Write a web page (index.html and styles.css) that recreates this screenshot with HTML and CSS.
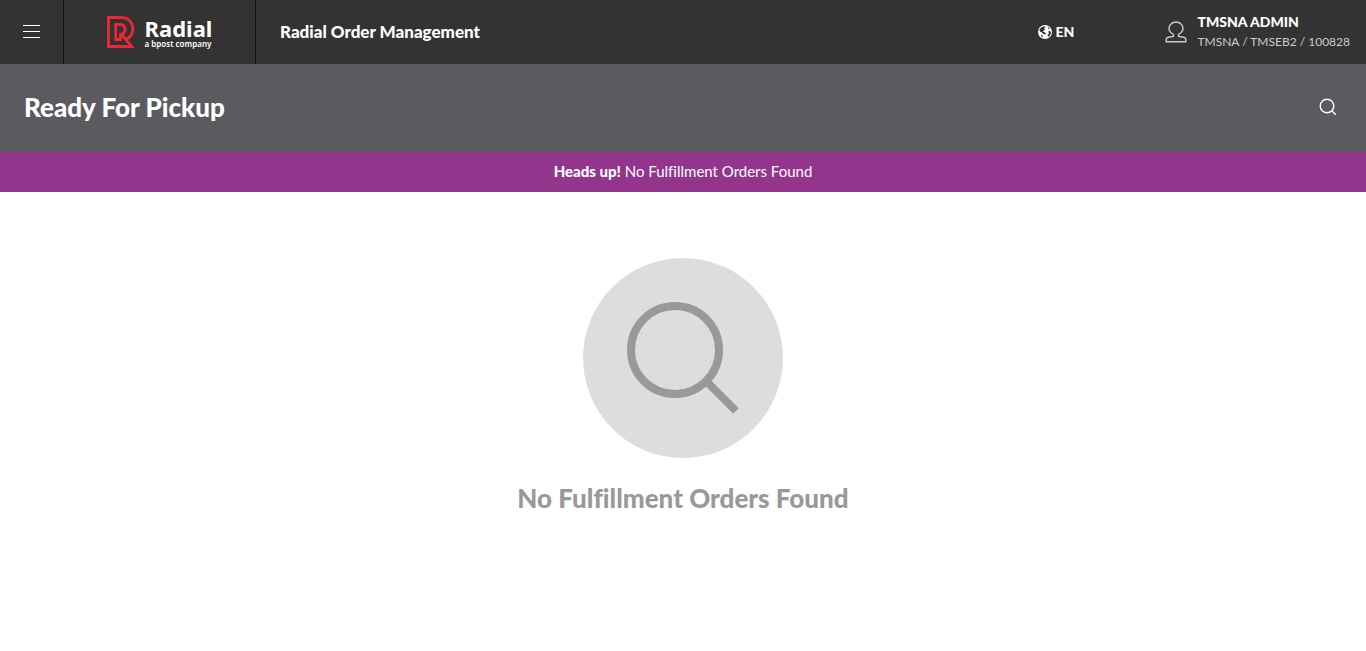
FILE: index.html
```html
<!DOCTYPE html>
<html lang="en">
<head>
<meta charset="utf-8">
<meta name="viewport" content="width=device-width, initial-scale=1">
<title>Ready For Pickup</title>
<link rel="stylesheet" href="styles.css">
</head>
<body>
<header class="topbar">
  <button class="menu-button" type="button" aria-label="Menu">
    <svg width="17" height="14" viewBox="0 0 17 14" aria-hidden="true"><path d="M0 .5h17M0 6.500h17M0 12.500h17" stroke="#fff"/></svg>
  </button>
  <a class="brand" href="#">
    <svg width="28" height="32" viewBox="0 0 28 32" fill="none" stroke="#ee2737" stroke-width="2.800" aria-hidden="true">
      <path d="M13.500 17v6.500H8.700V8.500h4.800a5 5 0 0 1 1.500 9.600l-.5.200L24.800 30.500H1.500v-29h12.500c7.200 0 11.800 4.800 11.800 11.200 0 5-2.600 8.700-6.800 10.700"/>
    </svg>
    <span class="brand-text">
      <span class="brand-name">Radial</span>
      <span class="brand-tagline">a bpost company</span>
    </span>
  </a>
  <span class="app-title">Radial Order Management</span>
  <button class="language" type="button">
    <svg width="14" height="14" viewBox="0 0 14 14" aria-hidden="true">
      <circle cx="7" cy="7" r="7" fill="#fff"/>
      <path fill="#333" d="M3 2.600L6.200 1.200 7.500 2 6 3.400l1.200.8L5.600 5.700 5 7l1.600.2L8.200 8.600 7 9.600 5.200 8.800 3.800 7.400 2 6.500 1.300 5zM9.500 1.600l2.500 2L10.600 4zM10.200 6.500l1.800-.6 1 1.600-.8 2.800L10 12l-.4-2 1.400-1.500zM3 9.500l1.500 1L5 12.600 3 11z"/>
    </svg>
    <span>EN</span>
  </button>
  <button class="account" type="button">
    <svg width="22" height="22" viewBox="0 0 22 22" fill="none" stroke="#ccc" stroke-width="1.400" aria-hidden="true">
      <path d="M8.500 15.500v-2C6 12 4 9.500 4 7.500a7 6.500 0 0 1 14 0c0 2-2 4.500-4.500 6v2l5.300.8c1.500.3 2 .9 2 2v2.400H1.200v-2.400c0-1.100.5-1.700 2-2z"/>
    </svg>
    <span class="account-text">
      <span class="account-name">TMSNA ADMIN</span>
      <span class="account-detail">TMSNA / TMSEB2 / 100828</span>
    </span>
  </button>
</header>
<div class="page-header">
  <h1 class="page-title">Ready For Pickup</h1>
  <button class="search-button" type="button" aria-label="Search">
    <svg width="18" height="18" viewBox="0 0 18 18" fill="none" stroke="#fff" stroke-width="1.400" aria-hidden="true"><circle cx="8" cy="8" r="6.800"/><path d="M12.800 12.800l4 4"/></svg>
  </button>
</div>
<div class="alert" role="alert"><strong>Heads up!</strong> No Fulfillment Orders Found</div>
<main class="empty-state">
  <svg class="empty-icon" width="200" height="200" viewBox="0 0 200 200" fill="none" aria-hidden="true">
    <circle cx="100" cy="100" r="100" fill="#ddd"/>
    <circle cx="92" cy="92" r="44" stroke="#999" stroke-width="8"/>
    <path d="M124 124l29 29" stroke="#999" stroke-width="8"/>
  </svg>
  <h2 class="empty-title">No Fulfillment Orders Found</h2>
</main>
</body>
</html>
```

FILE: styles.css
```css
* { box-sizing: border-box; }
body {
  margin: 0;
  background: #fff;
  color: #fff;
  font-family: Lato, "Liberation Sans", sans-serif;
  font-size: 14px;
  font-variant-ligatures: none;
  line-height: 20px;
}
button {
  padding: 0;
  border: 0;
  background: none;
  color: inherit;
  font: inherit;
  cursor: pointer;
}
svg { display: block; flex: none; }
.topbar {
  display: flex;
  align-items: center;
  height: 64px;
  background: #333;
}
.menu-button {
  display: flex;
  align-items: center;
  justify-content: center;
  align-self: stretch;
  width: 64px;
  border-right: 1px solid #111;
}
.brand {
  display: flex;
  align-items: center;
  justify-content: center;
  align-self: stretch;
  gap: 10px;
  width: 192px;
  border-right: 1px solid #111;
  color: #fff;
  text-decoration: none;
}
.brand-text {
  display: flex;
  flex-direction: column;
  font-family: "Noto Sans", sans-serif;
}
.brand-name {
  font-size: 22px;
  font-weight: 700;
  line-height: 24px;
}
.brand-tagline {
  font-size: 8px;
  font-weight: 600;
  line-height: 8px;
}
.app-title {
  margin-left: 24px;
  font-size: 17px;
  font-weight: 900;
}
.language {
  display: flex;
  align-items: center;
  gap: 4px;
  margin-left: auto;
  margin-right: 91px;
  font-weight: 900;
}
.account {
  display: flex;
  align-items: center;
  gap: 10px;
  margin-right: 16px;
  text-align: left;
}
.account-text { display: flex; flex-direction: column; }
.account-name { font-weight: 900; }
.account-detail { color: #ccc; font-size: 12px; }
.page-header {
  display: flex;
  align-items: center;
  justify-content: space-between;
  height: 88px;
  padding: 0 24px 2px;
  background: #5b5b5f;
}
.page-title {
  margin: 0;
  font-size: 26px;
  font-weight: 900;
  line-height: 32px;
}
.search-button { padding: 5px; }
.alert {
  padding: 9px 16px 11px;
  background: #93358d;
  font-size: 15px;
  text-align: center;
}
.alert strong { font-weight: 900; }
.empty-state {
  display: flex;
  flex-direction: column;
  align-items: center;
  gap: 24px;
  padding: 66px 24px;
}
.empty-title {
  margin: 0;
  color: #999;
  font-size: 26px;
  font-weight: 900;
  line-height: 32px;
  text-align: center;
}
```
